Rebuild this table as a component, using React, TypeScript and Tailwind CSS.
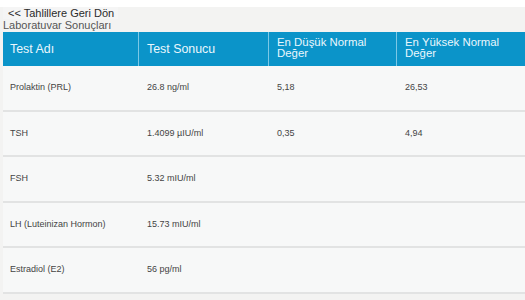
import React from "react";

const rows = [
  { name: "Prolaktin (PRL)", result: "26.8 ng/ml", low: "5,18", high: "26,53" },
  { name: "TSH", result: "1.4099 µIU/ml", low: "0,35", high: "4,94" },
  { name: "FSH", result: "5.32 mIU/ml", low: "", high: "" },
  { name: "LH (Luteinizan Hormon)", result: "15.73 mIU/ml", low: "", high: "" },
  { name: "Estradiol (E2)", result: "56 pg/ml", low: "", high: "" },
];

export default function App() {
  return (
    <div
      className="w-[525px] h-[300px] overflow-hidden bg-[#f3f3f2]"
      style={{ fontFamily: '"Liberation Sans", Arial, sans-serif' }}
    >
      <div className="h-[7px] bg-white" />
      <div className="pl-[3px]">
        <div className="w-fit whitespace-nowrap text-[11px] leading-[12px] text-[#2b2b2b] pl-[5px] pr-[4px] bg-[#f5f5f5]">
          &lt;&lt; Tahlillere Geri Dön
        </div>
        <div className="text-[11px] leading-[12px] text-[#555] whitespace-nowrap">Laboratuvar Sonuçları</div>
        <div className="mt-[1px] w-[540px]">
          <div className="flex h-[34px] bg-[#0b94c9] text-[#eaf7fd]">
            <div className="w-[136px] shrink-0 pl-[7px] text-[12.4px] leading-[34px] border-r border-[#7cc8e6]">Test Adı</div>
            <div className="w-[130px] shrink-0 pl-[8px] text-[12.4px] leading-[34px] border-r border-[#7cc8e6]">Test Sonucu</div>
            <div className="w-[128px] shrink-0 pl-[8px] pt-[5px] text-[11.4px] leading-[11px] border-r border-[#7cc8e6]">En Düşük Normal<br />Değer</div>
            <div className="flex-1 pl-[8px] pt-[5px] text-[11.4px] leading-[11px]">En Yüksek Normal<br />Değer</div>
          </div>
          {rows.map((r) => (
            <div key={r.name} className="flex h-[45.5px] items-center bg-[#f7f8f8] border-b-2 border-[#e2e3e3] text-[9px] text-[#444]">
              <div className="w-[136px] shrink-0 pl-[7px]">{r.name}</div>
              <div className="w-[130px] shrink-0 pl-[8px]">{r.result}</div>
              <div className="w-[128px] shrink-0 pl-[8px]">{r.low}</div>
              <div className="flex-1 pl-[8px]">{r.high}</div>
            </div>
          ))}
        </div>
      </div>
    </div>
  );
}
